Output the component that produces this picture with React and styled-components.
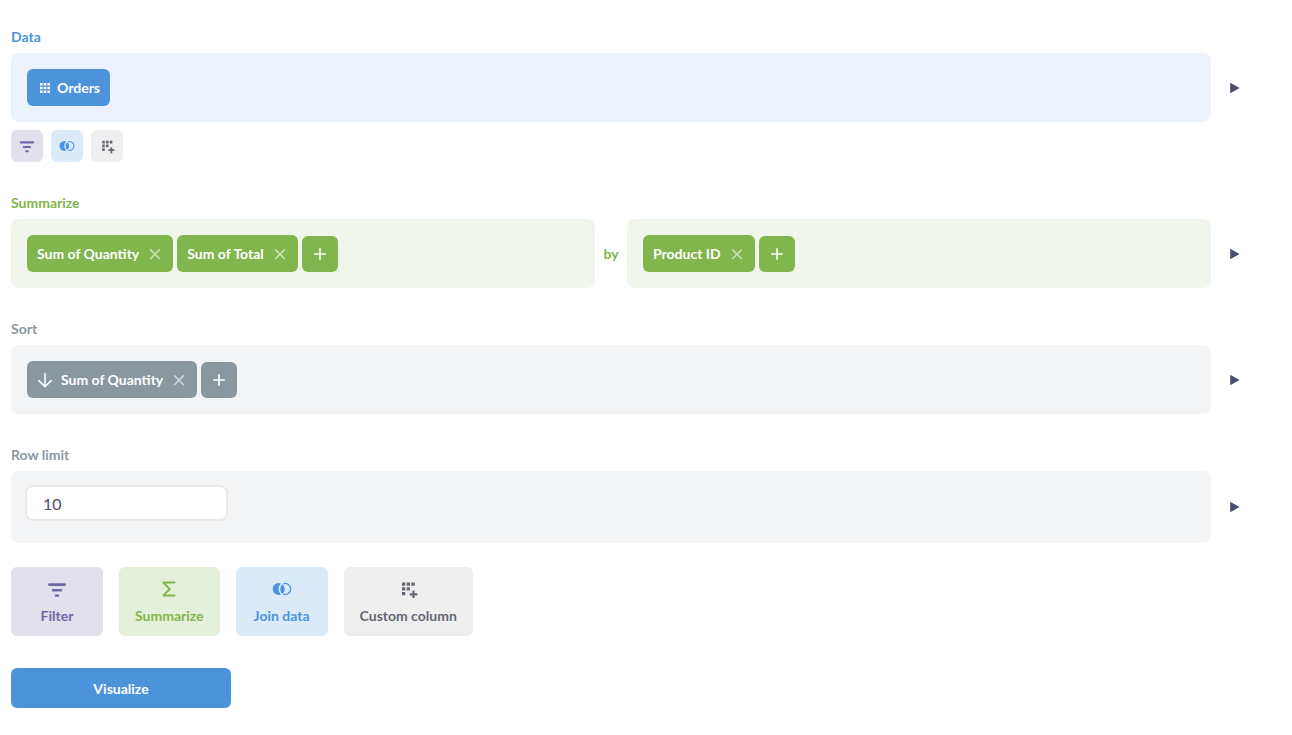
import React from "react";
import styled, { createGlobalStyle } from "styled-components";

const colors = {
  blue: "#4c93db",
  blueSoft: "#ecf3fc",
  blueTint: "#daeaf9",
  green: "#80b64d",
  greenSoft: "#f1f6ed",
  greenTint: "#e4f0da",
  gray: "#8b979f",
  grayLabel: "#8a989f",
  graySoft: "#f3f4f6",
  grayTint: "#efefef",
  purple: "#6c68a6",
  purpleTint: "#e1e0ec",
  medium: "#656874",
  dark: "#484f6b",
};

const GlobalStyle = createGlobalStyle`
  *, *::before, *::after { box-sizing: border-box; }
  body { margin: 0; background: #fff; }
  body, button, input { font-family: Lato, sans-serif; }
  button { border: 0; padding: 0; background: none; color: inherit; cursor: pointer; }
  svg { display: block; flex: none; }
`;

const Page = styled.main`
  padding: 28px 33px 27px 11px;
  font-size: 14px;
  line-height: 17px;
  font-weight: 700;
`;

const Step = styled.section`
  color: ${(p) => p.$color};
  margin-bottom: ${(p) => (p.$last ? "24px" : "32px")};
`;

const StepTitle = styled.h2`
  display: block;
  margin: 0 0 8px;
  font: inherit;
`;

const StepRow = styled.div`
  display: flex;
  align-items: center;
`;

const Panel = styled.div`
  flex: 1;
  display: flex;
  align-items: flex-end;
  gap: 4px;
  padding: ${(p) => (p.$form ? "14px 14px 22px" : "16px")};
  border-radius: 8px;
  background: ${(p) => p.$bg};
`;

const Joiner = styled.span`
  width: 32px;
  text-align: center;
`;

const PreviewButton = styled.button`
  display: flex;
  align-items: center;
  justify-content: center;
  width: 48px;
  height: 32px;
  color: ${colors.dark};
`;

const Chip = styled.div`
  display: flex;
  align-items: center;
  gap: 8px;
  padding: 10px;
  border-radius: 6px;
  color: #fff;
  background: ${(p) => p.$color};
`;

const ChipLabel = styled.button`
  display: flex;
  align-items: center;
  gap: ${(p) => (p.$tight ? "4px" : "8px")};
  font-size: 14px;
  line-height: 17px;
  font-weight: 700;
`;

const RemoveButton = styled.button`
  opacity: 0.6;
`;

const AddButton = styled.button`
  display: flex;
  align-items: center;
  justify-content: center;
  width: 36px;
  height: 36px;
  border-radius: 6px;
  color: #fff;
  background: ${(p) => p.$color};
`;

const LimitInput = styled.input`
  width: 203px;
  height: 36px;
  padding: 0 16px;
  border: 2px solid #ebe8ea;
  border-radius: 8px;
  outline: none;
  background: #fff;
  color: ${colors.dark};
  font-size: 16px;
`;

const ActionRow = styled.div`
  display: flex;
  gap: ${(p) => (p.$small ? "8px" : "16px")};
  margin-top: ${(p) => (p.$small ? "8px" : "0")};
`;

const SmallAction = styled.button`
  display: flex;
  align-items: center;
  justify-content: center;
  width: 32px;
  height: 32px;
  border-radius: 6px;
  color: ${(p) => p.$color};
  background: ${(p) => p.$bg};
`;

const LargeAction = styled.button`
  display: flex;
  flex-direction: column;
  align-items: center;
  gap: 8px;
  min-width: 92px;
  padding: 12px 16px;
  border-radius: 6px;
  color: ${(p) => p.$color};
  background: ${(p) => p.$bg};
  font-size: 14px;
  line-height: 17px;
  font-weight: 700;
`;

const VisualizeButton = styled.button`
  display: block;
  width: 220px;
  height: 40px;
  margin-top: 32px;
  border-radius: 6px;
  color: #fff;
  background: ${colors.blue};
  font-size: 14px;
  line-height: 17px;
  font-weight: 700;
`;

const CloseIcon = () => (
  <svg width="16" height="16" viewBox="0 0 16 16" fill="none" stroke="currentColor" strokeWidth="1.5" aria-hidden="true">
    <path d="M3.2 3.4l9.6 9.6M12.8 3.4L3.2 13" />
  </svg>
);

const PlusIcon = () => (
  <svg width="12" height="12" viewBox="0 0 12 12" fill="none" stroke="currentColor" strokeWidth="1.6" aria-hidden="true">
    <path d="M6 .2v11.6M.2 6h11.6" />
  </svg>
);

const ArrowDownIcon = () => (
  <svg width="16" height="16" viewBox="0 0 16 16" fill="none" stroke="currentColor" strokeWidth="1.5" strokeLinecap="round" strokeLinejoin="round" aria-hidden="true">
    <path d="M8 1.600v13M1.800 8.600L8 14.600l6.200-6" />
  </svg>
);

const TableIcon = () => (
  <svg width="16" height="16" viewBox="0 0 16 16" fill="currentColor" aria-hidden="true">
    <path d="M3 3h2.600v2.600H3zM6.700 3h2.600v2.600H6.700zM10.400 3H13v2.600h-2.600zM3 6.700h2.600v2.600H3zM6.700 6.700h2.600v2.600H6.700zM10.400 6.700H13v2.600h-2.600zM3 10.400h2.600V13H3zM6.700 10.400h2.600V13H6.700zM10.400 10.400H13V13h-2.600z" />
  </svg>
);

const PlayIcon = () => (
  <svg width="10" height="12" viewBox="0 0 10 12" fill="currentColor" aria-hidden="true">
    <path d="M.2 .8L9.600 6l-9.400 5.200z" />
  </svg>
);

const FilterIcon = ({ size = 20 }) => (
  <svg width={size} height={size} viewBox="0 0 20 20" fill="none" stroke="currentColor" strokeWidth="2.800" strokeLinecap="round" aria-hidden="true">
    <path d="M2.400 5.600h15.200" />
    <path d="M6 11.300h8M8.900 16.600h2.200" strokeWidth="2.400" />
  </svg>
);

const SumIcon = () => (
  <svg width="20" height="20" viewBox="0 0 20 20" fill="none" stroke="currentColor" strokeWidth="2" strokeLinecap="round" strokeLinejoin="round" aria-hidden="true">
    <path d="M15.600 3.600H4.400l6.400 6.400-6.400 6.400h11.200" />
  </svg>
);

const JoinIcon = ({ size = 20 }) => (
  <svg width={size} height={size} viewBox="0 0 20 20" aria-hidden="true">
    <path fill="currentColor" d="M6.600 4a6 6 0 1 0 0 12c.9 0 1.700-.2 2.400-.5a7.300 7.300 0 0 1 0-11A6 6 0 0 0 6.600 4z" />
    <path fill="currentColor" d="M10.200 5.200a5.900 5.900 0 0 1 0 9.600 6.700 6.700 0 0 1 0-9.600z" />
    <path fill="none" stroke="currentColor" strokeWidth="1.300" d="M11.200 4.900a5.500 5.500 0 1 1 0 10.200" />
  </svg>
);

const ColumnIcon = ({ size = 20 }) => (
  <svg width={size} height={size} viewBox="0 0 20 20" fill="currentColor" aria-hidden="true">
    <path d="M4 3.500h3.300v3.300H4zM8.700 3.500H12v3.300H8.700zM13.400 3.500h3.300v3.300h-3.300zM4 8.200h3.300v3.300H4zM8.700 8.200H12v3.300H8.700zM4 12.900h3.300v3.300H4z" />
    <path d="M14.400 11.500h2.200v2.700h2.700v2.200h-2.700v2.700h-2.200v-2.700h-2.700v-2.200h2.700z" />
  </svg>
);

function Preview() {
  return (
    <PreviewButton type="button" aria-label="Preview">
      <PlayIcon />
    </PreviewButton>
  );
}

function Clause({ color, icon, children }) {
  return (
    <Chip $color={color}>
      <ChipLabel type="button">
        {icon}
        {children}
      </ChipLabel>
      <RemoveButton type="button" aria-label="Remove">
        <CloseIcon />
      </RemoveButton>
    </Chip>
  );
}

function Add({ color }) {
  return (
    <AddButton type="button" aria-label="Add" $color={color}>
      <PlusIcon />
    </AddButton>
  );
}

export default function App() {
  return (
    <>
      <GlobalStyle />
      <Page>
        <Step $color={colors.blue}>
          <StepTitle>Data</StepTitle>
          <StepRow>
            <Panel $bg={colors.blueSoft}>
              <Chip $color={colors.blue}>
                <ChipLabel type="button" $tight>
                  <TableIcon />
                  Orders
                </ChipLabel>
              </Chip>
            </Panel>
            <Preview />
          </StepRow>
          <ActionRow $small>
            <SmallAction type="button" aria-label="Filter" $color={colors.purple} $bg={colors.purpleTint}>
              <FilterIcon size={16} />
            </SmallAction>
            <SmallAction type="button" aria-label="Join data" $color={colors.blue} $bg={colors.blueTint}>
              <JoinIcon size={16} />
            </SmallAction>
            <SmallAction type="button" aria-label="Custom column" $color={colors.medium} $bg={colors.grayTint}>
              <ColumnIcon size={16} />
            </SmallAction>
          </ActionRow>
        </Step>

        <Step $color={colors.green}>
          <StepTitle>Summarize</StepTitle>
          <StepRow>
            <Panel $bg={colors.greenSoft}>
              <Clause color={colors.green}>Sum of Quantity</Clause>
              <Clause color={colors.green}>Sum of Total</Clause>
              <Add color={colors.green} />
            </Panel>
            <Joiner>by</Joiner>
            <Panel $bg={colors.greenSoft}>
              <Clause color={colors.green}>Product ID</Clause>
              <Add color={colors.green} />
            </Panel>
            <Preview />
          </StepRow>
        </Step>

        <Step $color={colors.grayLabel}>
          <StepTitle>Sort</StepTitle>
          <StepRow>
            <Panel $bg={colors.graySoft}>
              <Clause color={colors.gray} icon={<ArrowDownIcon />}>
                Sum of Quantity
              </Clause>
              <Add color={colors.gray} />
            </Panel>
            <Preview />
          </StepRow>
        </Step>

        <Step $color={colors.grayLabel} $last>
          <StepTitle as="label" htmlFor="row-limit">
            Row limit
          </StepTitle>
          <StepRow>
            <Panel $bg={colors.graySoft} $form>
              <LimitInput id="row-limit" type="text" inputMode="numeric" defaultValue="10" />
            </Panel>
            <Preview />
          </StepRow>
        </Step>

        <ActionRow>
          <LargeAction type="button" $color={colors.purple} $bg={colors.purpleTint}>
            <FilterIcon />
            Filter
          </LargeAction>
          <LargeAction type="button" $color={colors.green} $bg={colors.greenTint}>
            <SumIcon />
            Summarize
          </LargeAction>
          <LargeAction type="button" $color={colors.blue} $bg={colors.blueTint}>
            <JoinIcon />
            Join data
          </LargeAction>
          <LargeAction type="button" $color={colors.medium} $bg={colors.grayTint}>
            <ColumnIcon />
            Custom column
          </LargeAction>
        </ActionRow>

        <VisualizeButton type="button">Visualize</VisualizeButton>
      </Page>
    </>
  );
}
